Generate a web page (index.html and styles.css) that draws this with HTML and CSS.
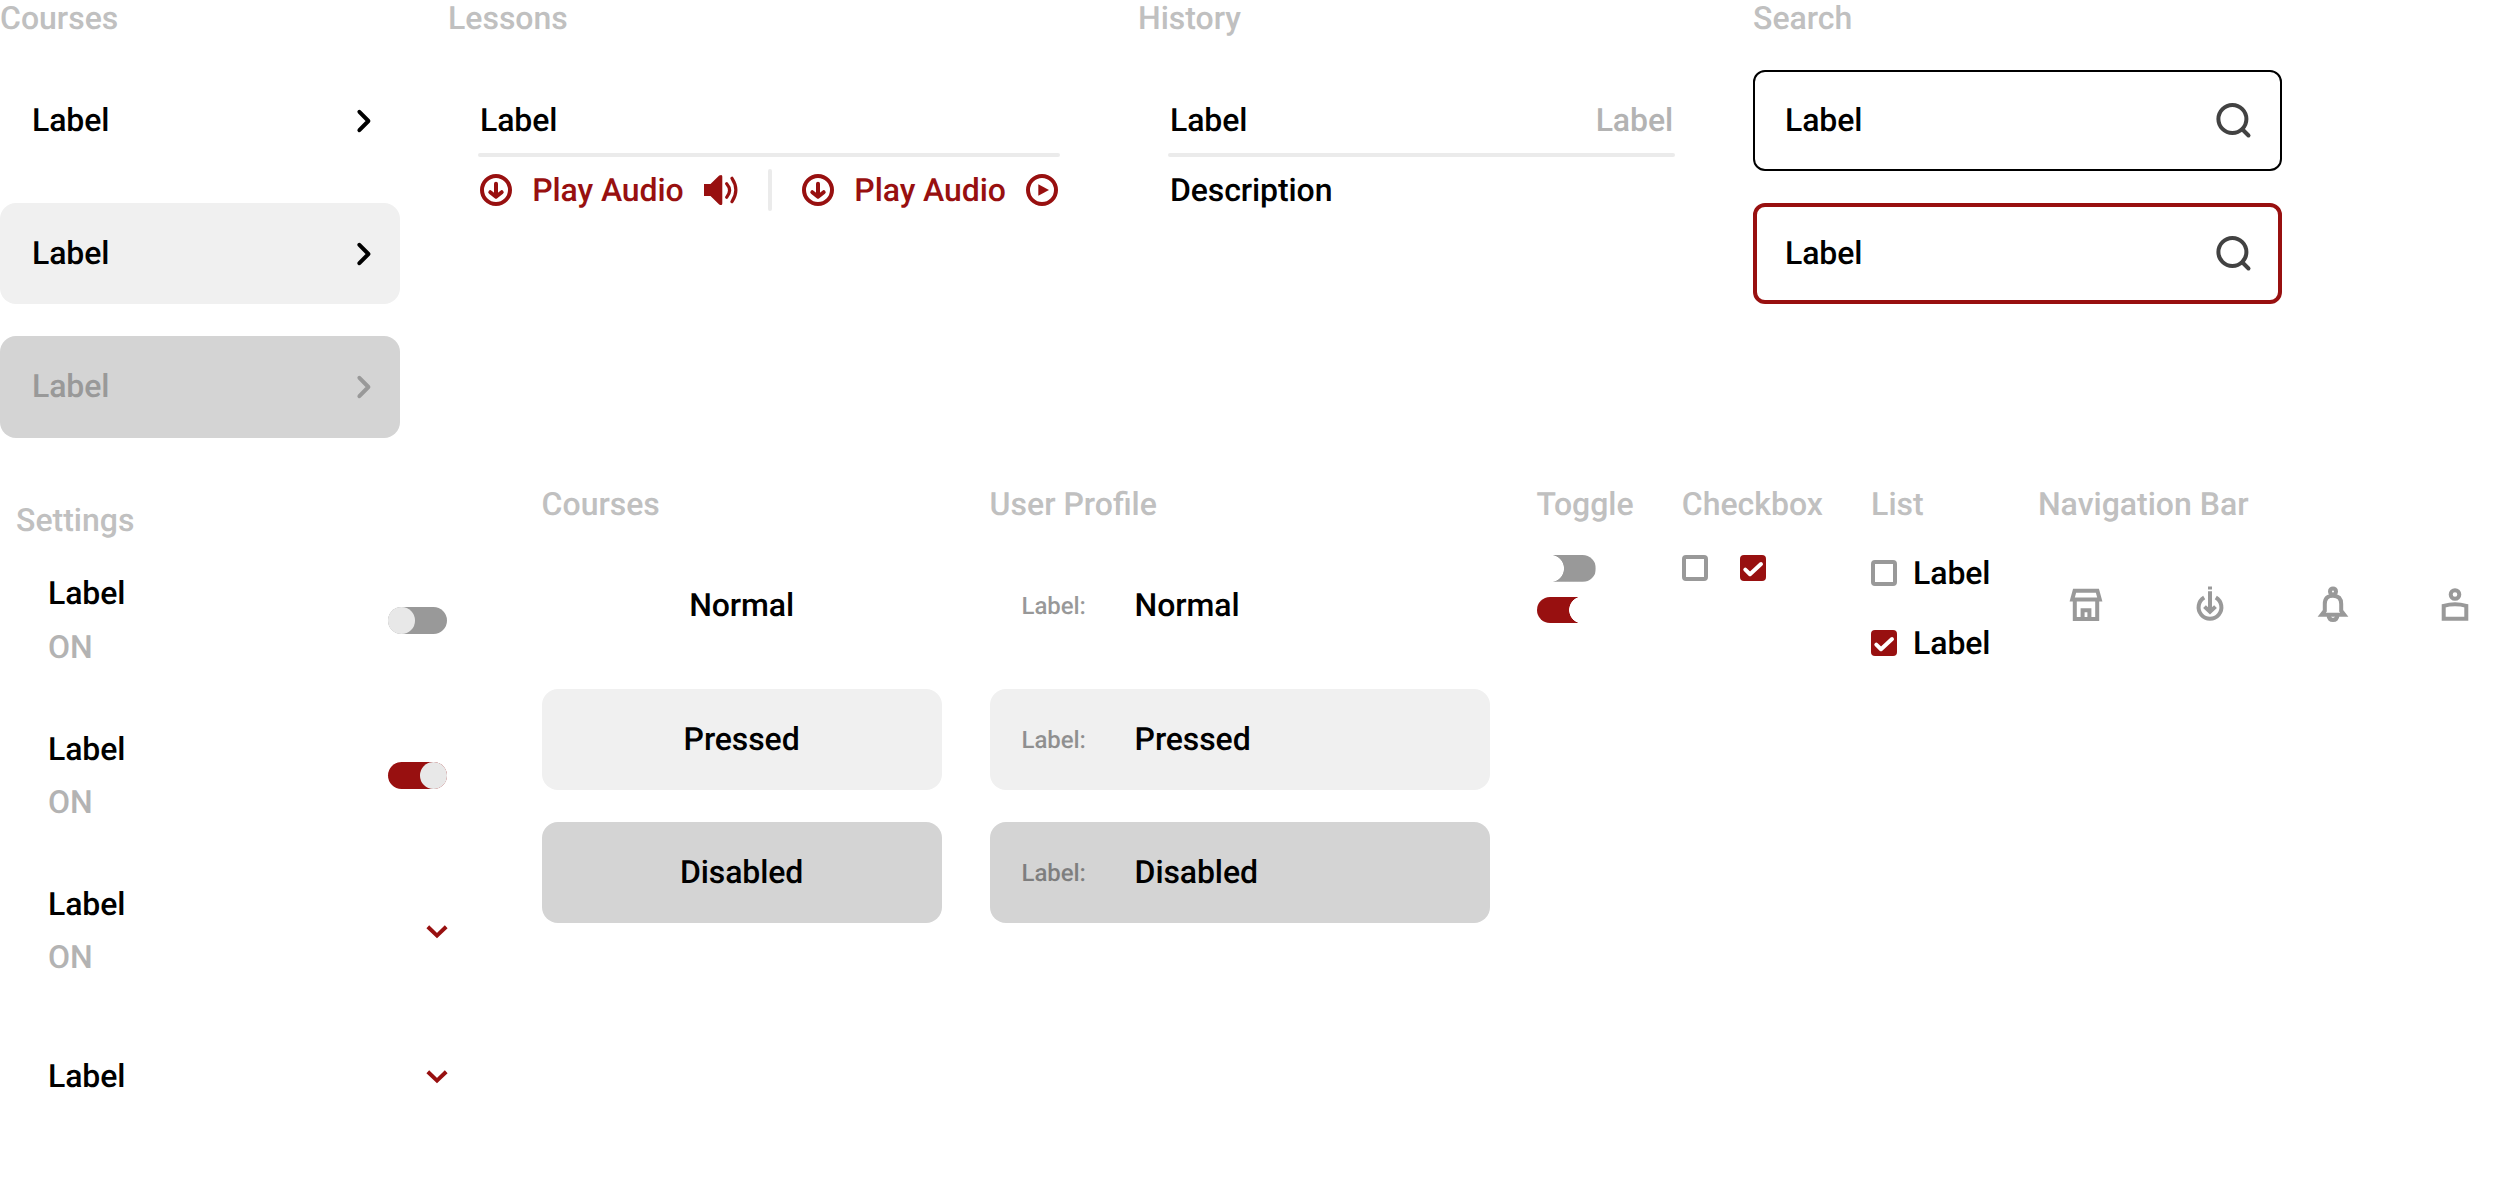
FILE: index.html
```
<!DOCTYPE html>
<html>
  <head>
    <meta charset="UTF-8" />
    <title>Components</title>
    <link rel="stylesheet" href="styles.css">
  </head>

  <body>
    <!-- shared icons -->
    <svg class="sprite">
      <symbol id="chevron-right" viewBox="0 0 32 32">
        <path d="M11.4 6.8L20.4 16L11.4 25.2" />
      </symbol>
      <symbol id="chevron-down" viewBox="0 0 22 14">
        <path d="M1.8 1.8L11 10.6L20.2 1.8" />
      </symbol>
      <symbol id="download" viewBox="0 0 32 32">
        <circle cx="16" cy="16" r="14" />
        <path d="M16 9.7V22.5M10.3 18.2L16 22.8L21.7 18.2" />
      </symbol>
      <symbol id="play" viewBox="0 0 32 32">
        <circle cx="16" cy="16" r="14" />
        <path class="solid" d="M12.3 10.3L23 16L12.3 21.7Z" />
      </symbol>
      <symbol id="speaker" viewBox="0 0 34 32">
        <path class="solid" d="M0 10H6.5L15.2 1.6Q18.3 0 18.3 2.5V29.5Q18.3 32 15.2 30.4L6.5 22H0Z" />
        <path d="M22.7 9.8Q28.5 16.5 22.7 23.2M28 4.3Q35.7 16 28 27.7" />
      </symbol>
      <symbol id="search" viewBox="0 0 38 38">
        <circle cx="17.4" cy="17" r="14" />
        <path d="M27.5 27.5L33.5 33.5" />
      </symbol>
      <symbol id="check" viewBox="0 0 26 26">
        <path d="M5.3 14.6L10 19.2L21 9" />
      </symbol>
    </svg>

    <div class="row">
      <div class="group courses">
        <h2>Courses</h2>
        <div class="stack">
          <div class="card">Label<svg class="chevron"><use href="#chevron-right" /></svg></div>
          <div class="card pressed">Label<svg class="chevron"><use href="#chevron-right" /></svg></div>
          <div class="card disabled muted">Label<svg class="chevron"><use href="#chevron-right" /></svg></div>
        </div>
      </div>

      <div class="group lessons">
        <h2>Lessons</h2>
        <div class="item">
          <div class="item-head"><span>Label</span></div>
          <div class="line"></div>
          <div class="audio">
            <svg class="icon"><use href="#download" /></svg>
            <span>Play Audio</span>
            <svg class="icon speaker"><use href="#speaker" /></svg>
            <div class="divider"></div>
            <svg class="icon"><use href="#download" /></svg>
            <span>Play Audio</span>
            <svg class="icon"><use href="#play" /></svg>
          </div>
        </div>
      </div>

      <div class="group history">
        <h2>History</h2>
        <div class="item">
          <div class="item-head"><span>Label</span><span class="sub">Label</span></div>
          <div class="line"></div>
          <div class="description">Description</div>
        </div>
      </div>

      <div class="group search">
        <h2>Search</h2>
        <div class="stack">
          <div class="field">Label<svg class="magnifier"><use href="#search" /></svg></div>
          <div class="field active">Label<svg class="magnifier"><use href="#search" /></svg></div>
        </div>
      </div>
    </div>

    <div class="row">
      <div class="group settings">
        <h2>Settings</h2>
        <div class="setting">
          <div class="setting-text">Label<span class="sub">ON</span></div>
          <div class="toggle"></div>
        </div>
        <div class="setting">
          <div class="setting-text">Label<span class="sub">ON</span></div>
          <div class="toggle on"></div>
        </div>
        <div class="setting">
          <div class="setting-text">Label<span class="sub">ON</span></div>
          <svg class="arrow"><use href="#chevron-down" /></svg>
        </div>
        <div class="setting single">
          <div class="setting-text">Label</div>
          <svg class="arrow"><use href="#chevron-down" /></svg>
        </div>
      </div>

      <div class="group buttons">
        <h2>Courses</h2>
        <div class="stack">
          <div class="card center">Normal</div>
          <div class="card center pressed">Pressed</div>
          <div class="card center disabled">Disabled</div>
        </div>
      </div>

      <div class="group profile">
        <h2>User Profile</h2>
        <div class="stack">
          <div class="card"><span class="key">Label:</span>Normal</div>
          <div class="card pressed"><span class="key">Label:</span>Pressed</div>
          <div class="card disabled"><span class="key">Label:</span>Disabled</div>
        </div>
      </div>

      <div class="group toggles">
        <h2>Toggle</h2>
        <div class="toggle plain"></div>
        <div class="toggle plain on"></div>
      </div>

      <div class="group checkboxes">
        <h2>Checkbox</h2>
        <div class="boxes">
          <div class="checkbox"></div>
          <div class="checkbox checked"><svg><use href="#check" /></svg></div>
        </div>
      </div>

      <div class="group list">
        <h2>List</h2>
        <div class="list-item"><div class="checkbox"></div>Label</div>
        <div class="list-item"><div class="checkbox checked"><svg><use href="#check" /></svg></div>Label</div>
      </div>

      <div class="group navigation">
        <h2>Navigation Bar</h2>
        <div class="nav">
          <svg viewBox="0 0 40 40">
            <path d="M8.6 6.7H31.4L33.8 15.5H6.2Z M8.8 15.5V35H31.2V15.5 M16.6 35V26.2H23.4V35" />
          </svg>
          <svg class="nav-download" viewBox="0 0 40 40">
            <path d="M14.2 13.5A11.4 11.4 0 1 0 25.8 13.5" />
            <path d="M20 7.3V27M14.5 22.6L20 27.8L25.5 22.6M20 2.4V5.4" />
          </svg>
          <svg viewBox="0 0 40 40">
            <circle cx="20" cy="7.4" r="3" />
            <path d="M8.7 30.8H31.3L28.2 26.8V20Q28.2 11.7 20 11.7T11.8 20V26.8Z M15.5 31.5Q16 36 20 36T24.5 31.5" />
          </svg>
          <svg viewBox="0 0 40 40">
            <circle cx="20" cy="10.5" r="4.3" />
            <path d="M8.7 34.8V21.9Q20 18.8 31.3 21.9V34.8Z" />
          </svg>
        </div>
      </div>
    </div>
  </body>
</html>
```
FILE: styles.css
```
* {
  box-sizing: border-box;
}

body {
  margin: 0;
  width: 2500px;
  height: 1196px;
  overflow: hidden;
  background-color: white;
  color: black;
  font-family: Roboto, sans-serif;
  font-size: 32px;
  font-weight: 500;
  line-height: 36px;
  letter-spacing: -0.1px;
  text-rendering: geometricPrecision;
}

h2 {
  margin: 0;
  color: #c0c0c0;
  font-size: 32px;
  font-weight: 500;
  line-height: 36px;
  letter-spacing: 0;
  white-space: nowrap;
}

svg {
  flex: none;
  fill: none;
  stroke: currentColor;
  stroke-width: 4;
}

.sprite {
  display: none;
}

.solid {
  fill: currentColor;
  stroke: none;
}

.row {
  display: flex;
  align-items: flex-start;
  height: 485.67px;
}

.group {
  flex: none;
}

.stack {
  display: flex;
  flex-direction: column;
  gap: 32px;
  margin-top: 33.67px;
}

/* cards */
.card {
  display: flex;
  align-items: center;
  justify-content: space-between;
  height: 101.33px;
  padding: 0 20px 1.4px 32px;
  border-radius: 16px;
}

.pressed {
  background-color: #f0f0f0;
}

.disabled {
  background-color: #d4d4d4;
}

.muted {
  color: #999;
}

.center {
  justify-content: center;
  padding: 0 0 1.4px;
}

.chevron {
  width: 32px;
  height: 32px;
  margin-top: 2px;
  stroke-linecap: round;
  stroke-linejoin: round;
}

.courses {
  width: 400px;
}

/* lessons and history */
.lessons {
  width: 644px;
  margin-left: 48px;
}

.history {
  width: 569px;
  margin-left: 46px;
}

.item {
  margin: 66px 32px 0 30px;
}

.item-head {
  display: flex;
  justify-content: space-between;
  padding: 0 2px;
}

.sub {
  color: #b3b3b3;
}

.line {
  height: 4px;
  margin-top: 15px;
  border-radius: 2px;
  background-color: #ebebeb;
}

.audio {
  display: flex;
  align-items: center;
  justify-content: space-between;
  height: 42px;
  margin-top: 12px;
  padding: 0 2px;
  color: #981010;
  white-space: nowrap;
}

.icon {
  width: 32px;
  height: 32px;
  stroke-linecap: round;
  stroke-linejoin: round;
}

.speaker {
  width: 34px;
  stroke-width: 3.2;
}

.divider {
  flex: none;
  width: 4px;
  height: 42px;
  margin: 0 10px;
  border-radius: 2px;
  background-color: #ebebeb;
}

.description {
  margin: 15px 2px 0;
}

/* search */
.search {
  width: 529px;
  margin-left: 46px;
}

.field {
  display: flex;
  align-items: center;
  justify-content: space-between;
  height: 101.33px;
  padding: 0 27px 1.4px 30px;
  border: 2px solid black;
  border-radius: 12px;
}

.active {
  padding: 0 25px 1.4px 28px;
  border: 4px solid #981010;
}

.magnifier {
  width: 38px;
  height: 38px;
  margin-top: 3px;
  color: #424242;
  stroke-linecap: round;
}

/* settings */
.settings {
  display: flex;
  flex-direction: column;
  width: 431px;
  margin: 16px 0 0 16px;
}

.setting {
  display: flex;
  align-items: center;
  justify-content: space-between;
  height: 89.33px;
  margin: 37.67px 0 65.9px 32px;
}

.setting-text {
  display: flex;
  flex-direction: column;
  gap: 17.33px;
}

.setting + .setting {
  margin-top: 0;
}

.setting + .single {
  height: 36px;
  margin-top: 17px;
}

.arrow {
  width: 22px;
  height: 14px;
  margin: 3px -1px 0 0;
  color: #981010;
}

.toggle {
  display: flex;
  width: 59px;
  height: 26.67px;
  border-radius: 14px;
  background-color: #999;
}

.setting .toggle {
  margin-top: 1px;
}

.toggle::before {
  content: "";
  width: 26.67px;
  height: 26.67px;
  border-radius: 50%;
  background-color: #e8e8e8;
}

.toggle.on {
  justify-content: flex-end;
  background-color: #981010;
}

/* track only, with the knob cut out of it */
.toggle.plain {
  background: radial-gradient(circle at 13.33px 50%, transparent 13.2px, #999 13.9px);
  clip-path: inset(0 0 0 15px);
}

.toggle.plain.on {
  background: radial-gradient(circle at 45.67px 50%, transparent 13.2px, #981010 13.9px);
  clip-path: inset(0 15px 0 0);
}

.toggle.plain::before {
  display: none;
}

.buttons {
  width: 400px;
  margin-left: 94.6px;
}

.profile {
  width: 500px;
  margin-left: 48px;
}

.profile .card {
  justify-content: flex-start;
}

.key {
  width: 113px;
  margin-top: 2px;
  font-size: 24px;
  opacity: 0.4;
}

.toggles {
  width: 97px;
  margin-left: 47px;
}

.toggles h2 {
  margin-bottom: 33.33px;
}

.toggles .toggle + .toggle {
  margin-top: 15px;
}

.checkboxes {
  width: 141px;
  margin-left: 48.2px;
}

.boxes {
  display: flex;
  gap: 32px;
  margin-top: 33.33px;
}

.checkbox {
  flex: none;
  width: 26px;
  height: 26px;
  border: 4px solid #999;
  border-radius: 4px;
}

.checked {
  border: none;
  background-color: #981010;
}

.checked svg {
  display: block;
  width: 26px;
  height: 26px;
  color: white;
  stroke-linecap: round;
  stroke-linejoin: round;
}

.list {
  width: 119px;
  margin-left: 48.33px;
}

.list-item {
  display: flex;
  align-items: center;
  gap: 16px;
  margin-top: 33.67px;
}

.navigation {
  width: 462px;
  margin-left: 47.8px;
}

.nav {
  display: flex;
  gap: 82.33px;
  margin-top: 62.67px;
  padding-left: 28px;
  color: #999;
}

.nav svg {
  width: 40px;
  height: 40px;
}

.nav .nav-download {
  margin-left: 2px;
}
```
